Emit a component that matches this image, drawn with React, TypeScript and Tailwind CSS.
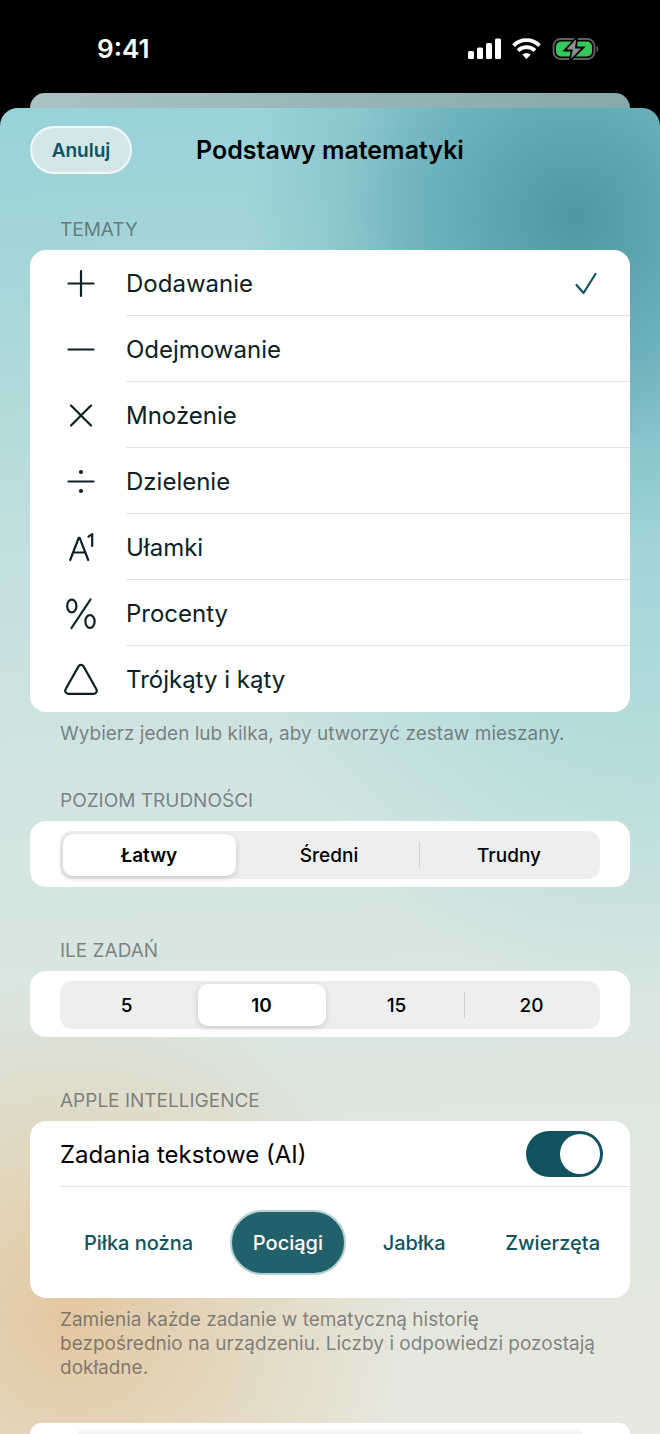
import { useState } from "react";
import type { ReactNode } from "react";

const stroke = {
  fill: "none",
  stroke: "currentColor",
  strokeWidth: 2.2,
  strokeLinecap: "round",
  strokeLinejoin: "round",
} as const;

const topics: { id: string; label: string; icon: ReactNode }[] = [
  { id: "add", label: "Dodawanie", icon: <path d="M18 5v25M5.500 17.500h25" /> },
  { id: "subtract", label: "Odejmowanie", icon: <path d="M5.500 17.500h25" /> },
  { id: "multiply", label: "Mnożenie", icon: <path d="M8 7.500l20 20M28 7.500l-20 20" /> },
  {
    id: "divide",
    label: "Dzielenie",
    icon: (
      <>
        <path d="M5.500 17.500h25" />
        <circle cx="18" cy="8" r="1" fill="currentColor" />
        <circle cx="18" cy="27" r="1" fill="currentColor" />
      </>
    ),
  },
  {
    id: "fractions",
    label: "Ułamki",
    icon: (
      <>
        <path d="M7.200 30L15.700 7.800h1L25.200 30M10.200 22.500h12" />
        <path d="M25.500 6.700l3.700-2.600V16" />
      </>
    ),
  },
  {
    id: "percent",
    label: "Procenty",
    icon: (
      <>
        <path d="M27.500 3.500L8.500 32" />
        <ellipse cx="8.800" cy="10" rx="4.600" ry="6.400" />
        <ellipse cx="27" cy="25.500" rx="4.600" ry="6.400" />
      </>
    ),
  },
  {
    id: "triangles",
    label: "Trójkąty i kąty",
    icon: <path d="M15.500 4.400L2.600 27.300a3 3 0 0 0 2.600 4.500h25.600a3 3 0 0 0 2.600-4.500L20.500 4.400a2.900 2.900 0 0 0-5 0z" />,
  },
];

const themes = ["Piłka nożna", "Pociągi", "Jabłka", "Zwierzęta"];

const StatusBar = () => (
  <header className="flex h-[93px] items-center justify-between bg-black pt-1 pr-[61px] pl-[97px] text-white">
    <time className="text-[26px] leading-8 font-semibold">9:41</time>
    <div className="flex items-center gap-[11px]">
      <svg width="33" height="22" viewBox="0 0 33 22" fill="currentColor">
        <rect x="0" y="13" width="6" height="8" rx="1.500" />
        <rect x="9" y="9.500" width="6" height="11.500" rx="1.500" />
        <rect x="18" y="5" width="6" height="16" rx="1.500" />
        <rect x="27" y="0.500" width="6" height="20.500" rx="1.500" />
      </svg>
      <svg width="29" height="22" viewBox="0 0 29 22" fill="none" stroke="currentColor" strokeWidth="3.800">
        <path d="M1.500 7.600a18.400 18.400 0 0 1 26 0" />
        <path d="M6 12.700a12 12 0 0 1 17 0" />
        <path d="M14.500 21l-4.200-4.400a6 6 0 0 1 8.400 0z" fill="currentColor" stroke="none" />
      </svg>
      <svg width="47" height="24" viewBox="0 0 47 24">
        <rect x="1.500" y="2" width="41" height="20" rx="7" fill="none" stroke="#5f6162" strokeWidth="1.800" />
        <rect x="4" y="4.500" width="36" height="15" rx="5" fill="#35c759" />
        <path d="M44.500 9c2.400 1 2.400 5 0 6z" fill="#5f6162" />
        <path d="M25.500-.5L12.500 13.500h7.200L17.500 24.500 31.500 10.500h-7.500z" fill="#8d8f90" stroke="#000" strokeWidth="1.800" />
      </svg>
    </div>
  </header>
);

const Section = ({ title, footer, children }: { title: string; footer?: string; children: ReactNode }) => (
  <section>
    <h2 className="mb-2 px-[30px] text-[19px] leading-6 text-[#3c3c43]/60 uppercase">{title}</h2>
    <div className="overflow-hidden rounded-2xl bg-white">{children}</div>
    {footer && <p className="mt-2.5 -mb-[9px] px-[30px] text-[19px] leading-6 text-[#3c3c43]/60">{footer}</p>}
  </section>
);

type SegmentedProps = {
  name: string;
  options: string[];
  value: string;
  onChange: (value: string) => void;
};

const Segmented = ({ name, options, value, onChange }: SegmentedProps) => {
  const selected = options.indexOf(value);
  return (
    <div className="px-[30px] pt-2.5 pb-2">
      <div role="radiogroup" aria-label={name} className="flex h-12 rounded-xl bg-[#eeeeee]">
        {options.map((option, i) => (
          <label
            key={option}
            className="relative flex flex-1 items-center justify-center pt-0.5 pr-0.5 text-[19px] font-medium text-black"
          >
            {i > 0 && i !== selected && i - 1 !== selected && (
              <span className="absolute top-[11px] -left-px h-[26px] w-px bg-[#d2d2d3]" />
            )}
            <input
              type="radio"
              name={name}
              checked={option === value}
              onChange={() => onChange(option)}
              className="peer absolute top-[3px] right-1 bottom-[3px] left-[3px] appearance-none rounded-[10px] checked:bg-white checked:shadow-[0_2px_6px_rgba(0,0,0,0.16)]"
            />
            <span className="relative peer-checked:font-semibold">{option}</span>
          </label>
        ))}
      </div>
    </div>
  );
};

const App = () => {
  const [chosen, setChosen] = useState(["add"]);
  const [level, setLevel] = useState("Łatwy");
  const [count, setCount] = useState("10");
  const [wordProblems, setWordProblems] = useState(true);
  const [theme, setTheme] = useState("Pociągi");

  const toggleTopic = (id: string) =>
    setChosen((ids) => (ids.includes(id) ? ids.filter((other) => other !== id) : [...ids, id]));

  return (
    <div className="flex min-h-screen flex-col bg-black font-[Inter,sans-serif]">
      <StatusBar />
      <div className="mx-[30px] h-[15px] rounded-t-[15px] bg-linear-to-r from-[#a9c2c5] to-[#86a9ac]" />

      <main className="flex flex-1 flex-col rounded-t-[18px] bg-[radial-gradient(circle_at_575px_110px,#4f98a3_0,#5ba5aeee_90px,#66aeb7cc_170px,#7cbcc488_240px,#94cfd800_330px),radial-gradient(ellipse_460px_560px_at_660px_340px,#98d0d6_0,#a6d8dacc_40%,#c0dfe000_100%),radial-gradient(ellipse_340px_340px_at_70px_1210px,#e3c8a1_0,#e3ceadcc_35%,#e9e4d400_100%),linear-gradient(178deg,#98d2d8_0,#a9d8da_16%,#c2dfdf_32%,#d0e4e1_48%,#d8e6e1_64%,#e0e7df_82%,#e8e8de_100%)] px-[30px] pt-[18px]">
        <div className="grid grid-cols-[1fr_auto_1fr] items-center">
          <button className="h-12 w-[102px] rounded-full border-2 border-white/70 bg-[#d3e6e8] pt-0.5 text-[19px] font-semibold text-[#10535f]">
            Anuluj
          </button>
          <h1 className="text-[25px] leading-8 font-semibold text-black">Podstawy matematyki</h1>
        </div>

        <div className="mt-11 flex flex-1 flex-col gap-[52px]">
          <Section title="Tematy" footer="Wybierz jeden lub kilka, aby utworzyć zestaw mieszany.">
            {topics.map(({ id, label, icon }, i) => (
              <button
                key={id}
                aria-pressed={chosen.includes(id)}
                onClick={() => toggleTopic(id)}
                className="flex h-[66px] w-full items-center pt-0.5 pl-[33px] text-left text-[#0b2125]"
              >
                <svg width="36" height="36" viewBox="0 0 36 36" {...stroke}>
                  {icon}
                </svg>
                <span
                  className={`ml-[27px] flex h-full flex-1 items-center justify-between pr-8 text-2xl ${
                    i < topics.length - 1 ? "border-b border-[#e2e3e4]" : ""
                  }`}
                >
                  {label}
                  {chosen.includes(id) && (
                    <svg width="24" height="24" viewBox="0 0 24 24" {...stroke} className="text-[#10535f]">
                      <path d="M2.500 13l7 8L21.500 2" />
                    </svg>
                  )}
                </span>
              </button>
            ))}
          </Section>

          <Section title="Poziom trudności">
            <Segmented name="Poziom trudności" options={["Łatwy", "Średni", "Trudny"]} value={level} onChange={setLevel} />
          </Section>

          <Section title="Ile zadań">
            <Segmented name="Ile zadań" options={["5", "10", "15", "20"]} value={count} onChange={setCount} />
          </Section>

          <Section
            title="Apple Intelligence"
            footer="Zamienia każde zadanie w tematyczną historię bezpośrednio na urządzeniu. Liczby i odpowiedzi pozostają dokładne."
          >
            <label className="ml-[30px] flex h-[66px] items-center justify-between border-b border-[#e2e3e4] pr-[27px] text-2xl text-black">
              <span className="pt-0.5">Zadania tekstowe (AI)</span>
              <input
                type="checkbox"
                role="switch"
                checked={wordProblems}
                onChange={(e) => setWordProblems(e.target.checked)}
                className="flex h-[46px] w-[77px] appearance-none items-center rounded-full bg-[#e4e4e6] p-[3px] before:size-10 before:rounded-full before:bg-white checked:justify-end checked:bg-[#10535f]"
              />
            </label>
            <div className="flex h-[111px] items-center justify-between pr-[7px] pl-[31px]">
              {themes.map((name) => (
                <button
                  key={name}
                  onClick={() => setTheme(name)}
                  className={`h-[65px] rounded-full border-2 px-[21px] text-[20px] font-medium whitespace-nowrap ${
                    name === theme ? "border-[#b5d0d3] bg-[#21616c] text-white" : "border-transparent text-[#10535f]"
                  }`}
                >
                  {name}
                </button>
              ))}
            </div>
          </Section>

          <div className="flex min-h-[11px] flex-1 flex-col justify-end rounded-t-2xl bg-white px-12">
            <div className="h-1.5 bg-linear-to-b from-white to-[#f1f2f2]" />
          </div>
        </div>
      </main>
    </div>
  );
};

export default App;
